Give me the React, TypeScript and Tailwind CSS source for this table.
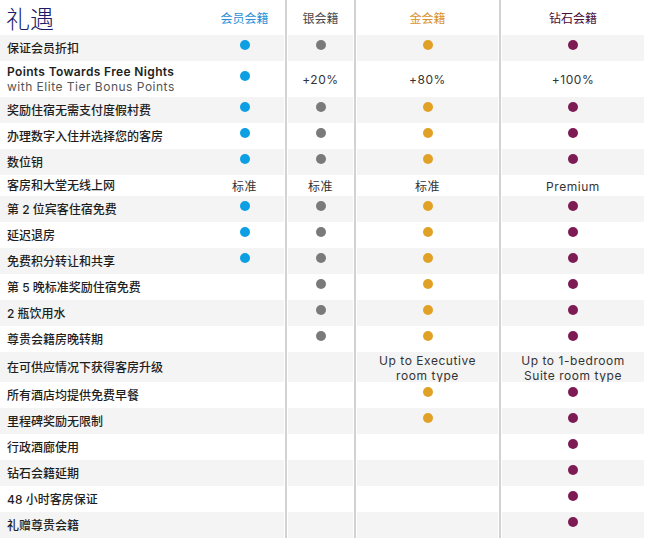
import React from "react";

type Cell = "B" | "S" | "G" | "D" | string | null;

interface Row {
  label: string;
  sub?: string;
  h: string;
  cells: [Cell, Cell, Cell, Cell];
}

const rows: Row[] = [
  { label: "保证会员折扣", h: "h-[26px]", cells: ["B", "S", "G", "D"] },
  { label: "Points Towards Free Nights", sub: "with Elite Tier Bonus Points", h: "h-[36px]", cells: ["B", "+20%", "+80%", "+100%"] },
  { label: "奖励住宿无需支付度假村费", h: "h-[26px]", cells: ["B", "S", "G", "D"] },
  { label: "办理数字入住并选择您的客房", h: "h-[26px]", cells: ["B", "S", "G", "D"] },
  { label: "数位钥", h: "h-[26px]", cells: ["B", "S", "G", "D"] },
  { label: "客房和大堂无线上网", h: "h-[21px]", cells: ["标准", "标准", "标准", "Premium"] },
  { label: "第 2 位宾客住宿免费", h: "h-[26px]", cells: ["B", "S", "G", "D"] },
  { label: "延迟退房", h: "h-[26px]", cells: ["B", "S", "G", "D"] },
  { label: "免费积分转让和共享", h: "h-[26px]", cells: ["B", "S", "G", "D"] },
  { label: "第 5 晚标准奖励住宿免费", h: "h-[26px]", cells: [null, "S", "G", "D"] },
  { label: "2 瓶饮用水", h: "h-[26px]", cells: [null, "S", "G", "D"] },
  { label: "尊贵会籍房晚转期", h: "h-[26px]", cells: [null, "S", "G", "D"] },
  { label: "在可供应情况下获得客房升级", h: "h-[30px]", cells: [null, null, "Up to Executive\nroom type", "Up to 1-bedroom\nSuite room type"] },
  { label: "所有酒店均提供免费早餐", h: "h-[26px]", cells: [null, null, "G", "D"] },
  { label: "里程碑奖励无限制", h: "h-[26px]", cells: [null, null, "G", "D"] },
  { label: "行政酒廊使用", h: "h-[26px]", cells: [null, null, null, "D"] },
  { label: "钻石会籍延期", h: "h-[26px]", cells: [null, null, null, "D"] },
  { label: "48 小时客房保证", h: "h-[26px]", cells: [null, null, null, "D"] },
  { label: "礼赠尊贵会籍", h: "h-[26px]", cells: [null, null, null, "D"] },
];

const dotColor: Record<string, string> = {
  B: "bg-[#0d9fe3]",
  S: "bg-[#7a7a7a]",
  G: "bg-[#e1a126]",
  D: "bg-[#7d1b55]",
};

function Value({ v }: { v: Cell }) {
  if (!v) return null;
  if (dotColor[v]) {
    return <div className={`w-[10px] h-[10px] rounded-full mb-[6px] ${dotColor[v]}`} />;
  }
  const lines = v.split("\n");
  return (
    <div className="text-center text-[12px] leading-[15px] text-[#333] tracking-[0.55px] pt-px">
      {lines.map((l, i) => (
        <div key={i}>{l}</div>
      ))}
    </div>
  );
}

export default function App() {
  return (
    <div
      className="w-[646px] h-[539px] bg-white overflow-hidden"
      style={{ fontFamily: '"Inter", "Noto Sans CJK SC", sans-serif' }}
    >
      {/* header */}
      <div className="flex h-[35px]">
        <div className="w-[285px] pr-px flex">
          <div className="w-[205px] pl-[6px] flex items-center">
            <span className="text-[24px] leading-none text-[#1b1a68] font-light" style={{ fontFamily: '"Noto Sans CJK SC", sans-serif' }}>
              礼遇
            </span>
          </div>
          <div className="flex-1 flex items-center justify-center pt-[3px] text-[12px] text-[#2a8fd6]">会员会籍</div>
        </div>
        <div className="w-[69px] border-l-2 border-[#d2d2d2] px-px pt-[3px] flex items-center justify-center text-[12px] text-[#4a4a4a]">银会籍</div>
        <div className="w-[145px] border-l-2 border-[#d2d2d2] px-px pt-[3px] flex items-center justify-center text-[12px] text-[#d9912e]">金会籍</div>
        <div className="flex-1 border-l-2 border-[#d2d2d2] pl-px pr-[2px] pt-[3px] flex items-center justify-center text-[12px] text-[#4a0d3b]">钻石会籍</div>
      </div>
      {rows.map((r, i) => {
        const bg = i % 2 === 0 ? "bg-[#f4f4f4]" : "bg-white";
        return (
          <div key={i} className={`flex ${r.h}`}>
            <div className="w-[285px] pr-px flex">
              <div className={`flex-1 flex ${bg}`}>
                <div className="w-[205px] pl-[7px] flex flex-col justify-center">
                  {r.sub ? (
                    <>
                      <div className="text-[12px] leading-[15px] font-semibold text-[#1e1e1e] tracking-[0.35px]">{r.label}</div>
                      <div className="text-[12px] leading-[15px] text-[#555] tracking-[0.5px]">{r.sub}</div>
                    </>
                  ) : (
                    <div className="text-[12px] leading-[15px] font-medium text-[#1e1e1e]">{r.label}</div>
                  )}
                </div>
                <div className="flex-1 flex items-center justify-center">
                  <Value v={r.cells[0]} />
                </div>
              </div>
            </div>
            <div className="w-[69px] border-l-2 border-[#d2d2d2] px-px flex">
              <div className={`flex-1 flex items-center justify-center ${bg}`}>
                <Value v={r.cells[1]} />
              </div>
            </div>
            <div className="w-[145px] border-l-2 border-[#d2d2d2] px-px flex">
              <div className={`flex-1 flex items-center justify-center ${bg}`}>
                <Value v={r.cells[2]} />
              </div>
            </div>
            <div className="flex-1 border-l-2 border-[#d2d2d2] pl-px pr-[2px] flex">
              <div className={`flex-1 flex items-center justify-center ${bg}`}>
                <Value v={r.cells[3]} />
              </div>
            </div>
          </div>
        );
      })}
    </div>
  );
}
